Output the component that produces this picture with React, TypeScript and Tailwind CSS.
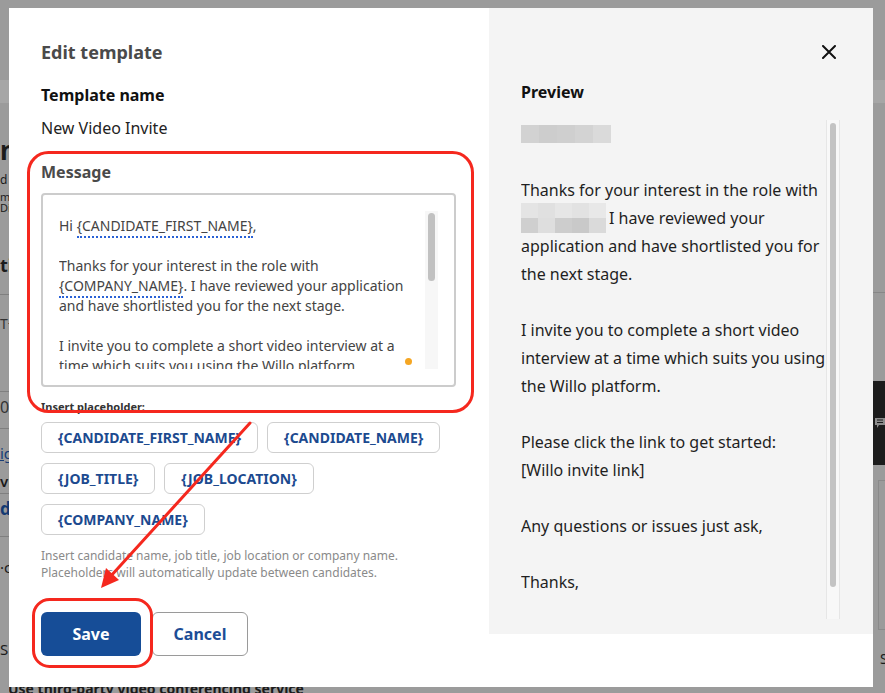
import React from 'react';

const FONT = { fontFamily: '"Noto Sans", "Open Sans", sans-serif' };

const Placeholder: React.FC<{ children: React.ReactNode }> = ({ children }) => (
  <span className="border-b-2 border-dotted border-[#2a62d6] pb-[1px]">{children}</span>
);

const chips = ['{CANDIDATE_FIRST_NAME}', '{CANDIDATE_NAME}', '{JOB_TITLE}', '{JOB_LOCATION}', '{COMPANY_NAME}'];

// pixelated blur blocks used in the preview
const Mosaic: React.FC<{ rows: string[][]; cell: [number, number] }> = ({ rows, cell }) => (
  <span className="inline-flex flex-col align-middle">
    {rows.map((r, i) => (
      <span key={i} className="flex">
        {r.map((c, j) => (
          <span key={j} style={{ width: cell[0], height: cell[1], background: c }} />
        ))}
      </span>
    ))}
  </span>
);

const BackgroundPage: React.FC = () => (
  <div className="flex h-[693px] w-[885px] bg-[#9b9b9b] text-[#1b1b1b]">
    {/* left strip of the page behind */}
    <div className="flex w-[9px] flex-col overflow-hidden whitespace-nowrap">
      <div className="h-[80px] shrink-0" />
      <div className="h-[23px] shrink-0 bg-[#a6a6a6]" />
      <div className="h-[33px] shrink-0" />
      <div className="h-[28px] shrink-0 text-[26px] font-bold leading-[28px]">n</div>
      <div className="mt-[9px] h-[14px] shrink-0 text-[12px] leading-[14px]">d</div>
      <div className="mt-[5px] h-[10px] shrink-0 text-[11px] leading-[10px]">m</div>
      <div className="h-[12px] shrink-0 text-[11px] leading-[12px]">Di</div>
      <div className="mt-[40px] h-[22px] shrink-0 text-[18px] font-bold leading-[22px]">ti</div>
      <div className="mt-[18px] h-px shrink-0 bg-[#7f7f7f]" />
      <div className="mt-[20px] h-[18px] shrink-0 text-[14px] leading-[18px] text-[#333]">T+</div>
      <div className="mt-[58px] h-px shrink-0 bg-[#7f7f7f]" />
      <div className="mt-[5px] h-[20px] shrink-0 text-[16px] leading-[20px] text-[#333]">0</div>
      <div className="mt-[11px] h-px shrink-0 bg-[#7f7f7f]" />
      <div className="mt-[14px] h-[20px] shrink-0 text-[15px] leading-[20px] text-[#173d77] underline">ig</div>
      <div className="mt-[8px] h-[20px] shrink-0 text-[15px] font-semibold leading-[20px]">vi</div>
      <div className="mt-[2px] h-px shrink-0 bg-[#7f7f7f]" />
      <div className="mt-[4px] h-[22px] shrink-0 text-[17px] font-bold leading-[22px] text-[#143a73]">de</div>
      <div className="mt-[16px] h-px shrink-0 bg-[#7f7f7f]" />
      <div className="mt-[20px] h-[20px] shrink-0 text-[15px] leading-[20px]">·c</div>
      <div className="mt-[62px] h-[20px] shrink-0 text-[15px] leading-[20px]">S</div>
    </div>
    <div className="flex flex-1 flex-col justify-end overflow-hidden">
      <div className="mb-[-8px] ml-[-1px] whitespace-nowrap text-[14px] font-bold leading-[24px]">
        Use third-party video conferencing service
      </div>
    </div>
    {/* right strip of the page behind */}
    <div className="flex w-[12px] flex-col overflow-hidden">
      <div className="h-[80px] shrink-0" />
      <div className="h-[23px] shrink-0 bg-[#a6a6a6]" />
      <div className="mt-[189px] h-px shrink-0 bg-[#878787]" />
      <div className="mt-[88px] flex h-[84px] shrink-0 items-center bg-[#1c1c1c] pl-[2px]">
        <svg width="10" height="10" viewBox="0 0 10 10">
          <path d="M0 0h10v7H4l-2 3V7H0z" fill="#8c8c8c" />
          <path d="M2 2h6M2 4.5h6" stroke="#1c1c1c" strokeWidth="1" />
        </svg>
      </div>
      <div className="ml-[5px] mt-[15px] h-[150px] shrink-0 border-y border-l border-[#8a8a8a]" />
      <div className="ml-[7px] mt-[19px] text-[14px] leading-[20px]">S</div>
    </div>
  </div>
);

export default function App() {
  return (
    <div className="relative h-[693px] w-[885px] overflow-hidden" style={FONT}>
      <BackgroundPage />

      {/* modal */}
      <div className="absolute left-[9px] top-[8px] flex h-[679px] w-[864px] bg-white">
        <div className="flex w-[480px] flex-col pl-[32px] pt-[32px]">
          <h2 className="text-[18px] font-bold leading-[24px] text-[#4a4a4a]">Edit template</h2>
          <div className="mt-[19px] text-[16px] font-bold leading-[24px] text-[#111]">Template name</div>
          <div className="mt-[9px] text-[16px] leading-[24px] text-[#222]">New Video Invite</div>
          <div className="mt-[20px] text-[16px] font-bold leading-[24px] text-[#4a4a4a]">Message</div>

          <div className="relative mt-[9px] flex h-[194px] w-[415px] rounded-[4px] border-2 border-[#cccccc] p-[16px]">
            <div className="flex-1 overflow-hidden whitespace-nowrap pt-[5px] text-[14px] leading-[20px] text-[#444]">
              <div>
                Hi <Placeholder>{'{CANDIDATE_FIRST_NAME}'}</Placeholder>,
              </div>
              <div className="h-[20px]" />
              <div>Thanks for your interest in the role with</div>
              <div>
                <Placeholder>{'{COMPANY_NAME}'}</Placeholder>. I have reviewed your application
              </div>
              <div>and have shortlisted you for the next stage.</div>
              <div className="h-[20px]" />
              <div>I invite you to complete a short video interview at a</div>
              <div>time which suits you using the Willo platform.</div>
              <div className="h-[20px]" />
              <div>Please click the link to get started:</div>
            </div>
            <div className="w-[13px] bg-[#f7f7f7] px-[3px] pt-[2px]">
              <div className="h-[68px] rounded-full bg-[#c1c1c1]" />
            </div>
            <span className="absolute bottom-[20px] right-[42px] h-[7px] w-[7px] rounded-full bg-[#f5a623]" />
          </div>

          <div className="mt-[13px] text-[11px] font-bold leading-[14px] text-[#333]">Insert placeholder:</div>
          <div className="mt-[8px] flex w-[416px] flex-wrap gap-x-[9px] gap-y-[10px]">
            {chips.map(c => (
              <button
                key={c}
                className="flex h-[31px] items-center rounded-[6px] border border-[#cfcfcf] bg-white px-[16px] text-[14px] font-bold text-[#1c4a8f]"
              >
                {c}
              </button>
            ))}
          </div>
          <p className="mt-[12px] text-[12px] leading-[17px] text-[#8a8a8a]">
            Insert candidate name, job title, job location or company name.
            <br />
            Placeholders will automatically update between candidates.
          </p>

          <div className="mt-[31px] flex gap-[11px]">
            <button className="h-[44px] w-[100px] rounded-[6px] bg-[#164d97] text-[16px] font-bold text-white">Save</button>
            <button className="h-[44px] w-[96px] rounded-[6px] border border-[#9a9a9a] bg-white text-[16px] font-bold text-[#1c4d96]">
              Cancel
            </button>
          </div>
        </div>

        <div className="flex h-[626px] w-[384px] flex-col bg-[#f4f4f4]">
          <div className="flex justify-end pr-[37px] pt-[37px]">
            <svg width="14" height="14" viewBox="0 0 14 14">
              <path d="M1 1l12 12M13 1L1 13" stroke="#111" strokeWidth="2" strokeLinecap="round" />
            </svg>
          </div>
          <div className="mt-[21px] pl-[32px] text-[16px] font-bold leading-[24px] text-[#111]">Preview</div>
          <div className="mt-[16px] flex h-[499px] pl-[32px] pr-[33px]">
            <div className="flex-1 overflow-hidden whitespace-nowrap text-[16px] leading-[28px] text-[#1f1f1f]">
              <div className="flex h-[28px] items-center">
                <Mosaic rows={[['#d2d2d2', '#cdcdcd', '#cfcfcf', '#d3d3d3', '#dadada']]} cell={[18, 18]} />
              </div>
              <div className="h-[28px]" />
              <div>Thanks for your interest in the role with</div>
              <div className="flex h-[28px] items-center">
                <Mosaic
                  rows={[
                    ['#e4e4e4', '#e0e0e0', '#e6e6e6', '#e2e2e2', '#e8e8e8'],
                    ['#cfcfcf', '#dedede', '#cdcdcd', '#c9c9c9', '#dadada'],
                  ]}
                  cell={[17, 15]}
                />
                <span className="ml-[3px]">I have reviewed your</span>
              </div>
              <div>application and have shortlisted you for</div>
              <div>the next stage.</div>
              <div className="h-[28px]" />
              <div>I invite you to complete a short video</div>
              <div>interview at a time which suits you using</div>
              <div>the Willo platform.</div>
              <div className="h-[28px]" />
              <div>Please click the link to get started:</div>
              <div>[Willo invite link]</div>
              <div className="h-[28px]" />
              <div>Any questions or issues just ask,</div>
              <div className="h-[28px]" />
              <div>Thanks,</div>
            </div>
            <div className="w-[14px] border-x border-[#e6e6e6] bg-[#f8f8f8] px-[3px] pt-[3px]">
              <div className="h-[464px] rounded-full bg-[#c3c3c3]" />
            </div>
          </div>
        </div>
      </div>

      {/* red annotation marks */}
      <svg className="pointer-events-none absolute left-0 top-0" width="885" height="693" viewBox="0 0 885 693">
        <rect x="28.5" y="152.5" width="444" height="259" rx="20" fill="none" stroke="#f5281e" strokeWidth="3" />
        <rect x="33.5" y="599.5" width="118" height="67" rx="16" fill="none" stroke="#f5281e" strokeWidth="3" />
        <line x1="250" y1="423" x2="110" y2="577" stroke="#f5281e" strokeWidth="3" strokeLinecap="round" />
        <polygon points="101,588 106,568 119,580" fill="#f5281e" />
      </svg>
    </div>
  );
}
